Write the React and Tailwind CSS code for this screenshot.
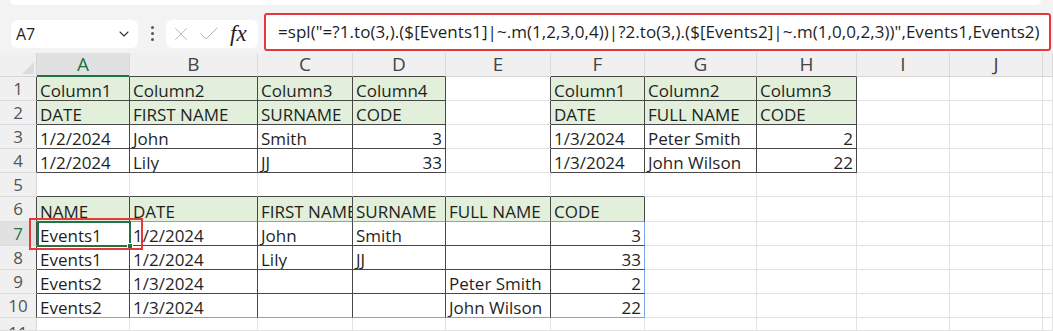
import React from "react";
import { ChevronDown, X, Check } from "lucide-react";

const COLS = ["A", "B", "C", "D", "E", "F", "G", "H", "I", "J", ""];

// values keyed by "row-col", col 0 = A
const cells = {
    "1-0": "Column1", "1-1": "Column2", "1-2": "Column3", "1-3": "Column4",
    "2-0": "DATE", "2-1": "FIRST NAME", "2-2": "SURNAME", "2-3": "CODE",
    "3-0": "1/2/2024", "3-1": "John", "3-2": "Smith", "3-3": 3,
    "4-0": "1/2/2024", "4-1": "Lily", "4-2": "JJ", "4-3": 33,
    "1-5": "Column1", "1-6": "Column2", "1-7": "Column3",
    "2-5": "DATE", "2-6": "FULL NAME", "2-7": "CODE",
    "3-5": "1/3/2024", "3-6": "Peter Smith", "3-7": 2,
    "4-5": "1/3/2024", "4-6": "John Wilson", "4-7": 22,
    "6-0": "NAME", "6-1": "DATE", "6-2": "FIRST NAME", "6-3": "SURNAME", "6-4": "FULL NAME", "6-5": "CODE",
    "7-0": "Events1", "7-1": "1/2/2024", "7-2": "John", "7-3": "Smith", "7-5": 3,
    "8-0": "Events1", "8-1": "1/2/2024", "8-2": "Lily", "8-3": "JJ", "8-5": 33,
    "9-0": "Events2", "9-1": "1/3/2024", "9-4": "Peter Smith", "9-5": 2,
    "10-0": "Events2", "10-1": "1/3/2024", "10-4": "John Wilson", "10-5": 22,
};

const tables = [
    { r1: 1, r2: 4, c1: 0, c2: 3, head: [1, 2] },
    { r1: 1, r2: 4, c1: 5, c2: 7, head: [1, 2] },
    { r1: 6, r2: 10, c1: 0, c2: 5, head: [6] },
];

const inTable = (r, c) => tables.some((t) => r >= t.r1 && r <= t.r2 && c >= t.c1 && c <= t.c2);
const isHead = (r, c) => tables.some((t) => t.head.includes(r) && c >= t.c1 && c <= t.c2);

const RIGHT = { light: "border-r-[#e2e2e2]", dark: "border-r-[#474747]", blue: "border-r-[#7aa4e4]" };
const BOTTOM = { light: "border-b-[#e2e2e2]", dark: "border-b-[#474747]", blue: "border-b-[#7aa4e4]" };

const rightKind = (r, c) => {
    if (c === 5 && r >= 7 && r <= 10) return "blue";
    if (inTable(r, c) || inTable(r, c + 1)) return "dark";
    return "light";
};
const bottomKind = (r, c) => {
    if ((r === 10 || r === 6) && c <= 5) return "blue";
    if (inTable(r, c) || inTable(r + 1, c)) return "dark";
    return "light";
};

const Cell = ({ r, c }) => {
    const v = cells[`${r}-${c}`];
    const num = typeof v === "number";
    return (
        <div
            className={`relative border-r border-b overflow-hidden whitespace-nowrap flex items-end pb-[1px] px-[3px] text-[17px] leading-[17px] text-[#1f1f1f] ${RIGHT[rightKind(r, c)]} ${BOTTOM[bottomKind(r, c)]} ${isHead(r, c) ? "bg-[#e2efda]" : "bg-white"} ${num ? "justify-end" : "justify-start"}`}
        >
            {v}
        </div>
    );
};

export default function App() {
    const rows = [1, 2, 3, 4, 5, 6, 7, 8, 9, 10, 11];
    return (
        <div className="w-[1053px] h-[331px] overflow-hidden bg-[#f3f3f3] relative" style={{ fontFamily: '"Open Sans", "Noto Sans", sans-serif' }}>
            {/* toolbar */}
            <div className="h-[53px] relative">
                <div className="absolute left-[10px] right-[12px] top-0 h-[5px] bg-white rounded-b-md"></div>
                <div className="flex items-center pt-[16px] pl-[11px]">
                    <div className="w-[127px] h-[28px] bg-white rounded-md flex items-center justify-between pl-[5px] pr-[6px]">
                        <span className="text-[16px] text-[#1f1f1f]">A7</span>
                        <ChevronDown size={16} strokeWidth={1.6} className="text-[#333]" />
                    </div>
                    <div className="w-[28px] flex flex-col items-center gap-[3px]">
                        <span className="w-[3px] h-[3px] rounded-full bg-[#555]"></span>
                        <span className="w-[3px] h-[3px] rounded-full bg-[#555]"></span>
                        <span className="w-[3px] h-[3px] rounded-full bg-[#555]"></span>
                    </div>
                    <div className="w-[92px] h-[28px] bg-white rounded-md flex items-center pl-[4px] gap-[5px]">
                        <X size={22} strokeWidth={1} className="text-[#b5b5b5]" />
                        <Check size={24} strokeWidth={1} className="text-[#b5b5b5]" />
                        <span className="text-[23px] italic text-[#222] ml-[4px] leading-none" style={{ fontFamily: '"Liberation Serif", serif' }}>fx</span>
                    </div>
                    <div className="ml-[6px] -mt-[3px] w-[787px] h-[38px] border-2 border-[#e63a3a] bg-white rounded-[3px] flex items-center pl-[12px] overflow-hidden">
                        <span className="text-[17px] tracking-[0.05px] text-[#1f1f1f] whitespace-nowrap">=spl("=?1.to(3,).($[Events1]|~.m(1,2,3,0,4))|?2.to(3,).($[Events2]|~.m(1,0,0,2,3))",Events1,Events2)</span>
                    </div>
                </div>
            </div>

            {/* sheet */}
            <div className="grid grid-cols-[37px_93px_128px_95px_93px_105px_94px_112px_100px_93px_93px_10px] grid-rows-[24px_24px_24px_24px_24px_24px_25px_24px_24px_24px_24px_13px]">
                <div className="bg-[#f0f0f0] border-r border-b border-r-[#d6d6d6] border-b-[#d6d6d6] relative">
                    <div className="absolute right-[2px] bottom-[2px] w-0 h-0 border-l-[12px] border-l-transparent border-b-[12px] border-b-[#dcdcdc]"></div>
                </div>
                {COLS.map((c, i) => (
                    <div
                        key={i}
                        className={`flex items-center justify-center text-[19px] border-r border-b ${i === 0 ? "bg-[#e1e1e1] text-[#217346] border-b-2 border-b-[#217346]" : "bg-[#f0f0f0] text-[#444]"} ${i !== 0 && inTable(1, i) ? "border-b-[#474747]" : ""} ${i !== 0 && !inTable(1, i) ? "border-b-[#d6d6d6]" : ""} border-r-[#dadada]`}
                    >
                        {c}
                    </div>
                ))}
                {rows.map((r) => (
                    <React.Fragment key={r}>
                        <div
                            className={`flex justify-center text-[17px] leading-[22px] border-r border-b border-b-[#dcdcdc] overflow-hidden ${r === 11 ? "items-start pt-[4px]" : "items-center"} ${r === 7 ? "bg-[#e1e1e1] text-[#217346]" : "bg-[#f0f0f0] text-[#555]"} ${inTable(r, 0) ? "border-r-[#474747]" : "border-r-[#d6d6d6]"}`}
                        >
                            {r}
                        </div>
                        {COLS.map((_, c) => (
                            <Cell key={c} r={r} c={c} />
                        ))}
                    </React.Fragment>
                ))}
            </div>

            {/* selected cell A7 */}
            <div className="absolute left-[37px] top-[221px] w-[94px] h-[26px] border-2 border-[#217346]">
                <div className="absolute -right-[4px] -bottom-[4px] w-[6px] h-[6px] bg-[#217346] border border-white"></div>
            </div>
            {/* annotation box */}
            <div className="absolute left-[29px] top-[218px] w-[114px] h-[32px] border-2 border-[#e63a3a]"></div>
        </div>
    );
}
